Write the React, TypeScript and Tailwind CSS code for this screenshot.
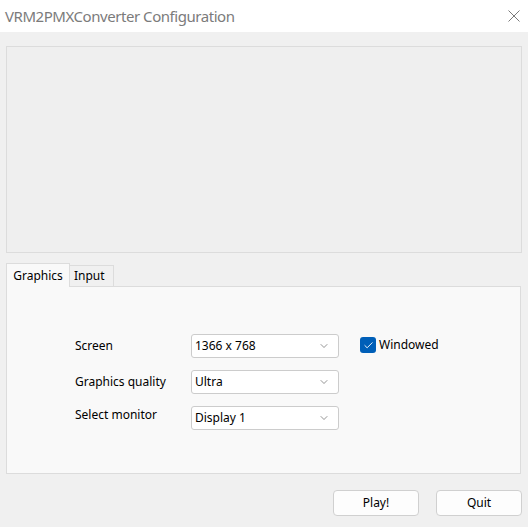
import { Check, ChevronDown } from "lucide-react";

const rows = [
  { label: "Screen", value: "1366 x 768" },
  { label: "Graphics quality", value: "Ultra" },
  { label: "Select monitor", value: "Display 1" },
];

function Dropdown({ value }: { value: string }) {
  return (
    <div className="w-[148px] h-[24px] bg-white border border-[#cccccc] rounded-[3px] flex items-center justify-between pl-[3px] pr-[8px] text-[12px] text-black">
      <span>{value}</span>
      <ChevronDown size={12} strokeWidth={1.3} className="text-[#5a5a5a]" />
    </div>
  );
}

export default function App() {
  return (
    <div className="w-[528px] h-[527px] bg-[#f0f0f0] flex flex-col font-['Segoe_UI','Noto_Sans',sans-serif]">
      {/* title bar */}
      <div className="h-[32px] bg-white flex items-center justify-between pl-[5px] pr-[8px]">
        <span className="text-[15px] text-[#7b7b7b] tracking-[-0.45px]">VRM2PMXConverter Configuration</span>
        <svg width="12" height="12" viewBox="0 0 12 12">
          <path d="M0.5 0.5 L11.5 11.5 M11.5 0.5 L0.5 11.5" stroke="#7a7a7a" strokeWidth="1" />
        </svg>
      </div>

      <div className="flex flex-col pl-[6px] pr-[6px] pt-[14px]">
        {/* preview panel */}
        <div className="h-[207px] bg-[#efefef] border border-[#dcdcdc]" />

        {/* tabs */}
        <div className="mt-[9px] flex items-end pr-[1px]">
          <div className="w-[64px] h-[24px] bg-[#f9f9f9] border border-b-0 border-[#dcdcdc] flex items-center justify-center text-[12px] text-black relative top-[1px] z-10">
            Graphics
          </div>
          <div className="w-[44px] h-[21px] bg-[#f0f0f0] border border-l-0 border-b-0 border-[#dcdcdc] flex items-center pl-[4px] text-[12px] text-black">
            Input
          </div>
        </div>
        <div className="h-[188px] mr-[1px] bg-[#f9f9f9] border border-[#dcdcdc] pl-[68px] pt-[47px] flex gap-[21px]">
          <div className="flex flex-col gap-[12px]">
            {rows.map((r, i) => (
              <div key={r.label} className="flex items-center h-[24px]">
                <span className={`w-[116px] text-[12px] text-black ${i === 2 ? "mb-[6px]" : ""}`}>{r.label}</span>
                <Dropdown value={r.value} />
              </div>
            ))}
          </div>
          <div className="flex items-center gap-[3px] h-[20px] mt-[1px]">
            <div className="w-[16px] h-[16px] rounded-[3px] bg-[#005fb8] flex items-center justify-center">
              <Check size={11} strokeWidth={2} className="text-white" />
            </div>
            <span className="text-[12px] text-black">Windowed</span>
          </div>
        </div>

        {/* buttons */}
        <div className="mt-[16px] flex justify-end gap-[17px]">
          <button className="w-[86px] h-[26px] bg-[#fdfdfd] border border-[#d0d0d0] rounded-[4px] text-[12px] text-black">
            Play!
          </button>
          <button className="w-[86px] h-[26px] bg-[#fdfdfd] border border-[#d0d0d0] rounded-[4px] text-[12px] text-black">
            Quit
          </button>
        </div>
      </div>
    </div>
  );
}
